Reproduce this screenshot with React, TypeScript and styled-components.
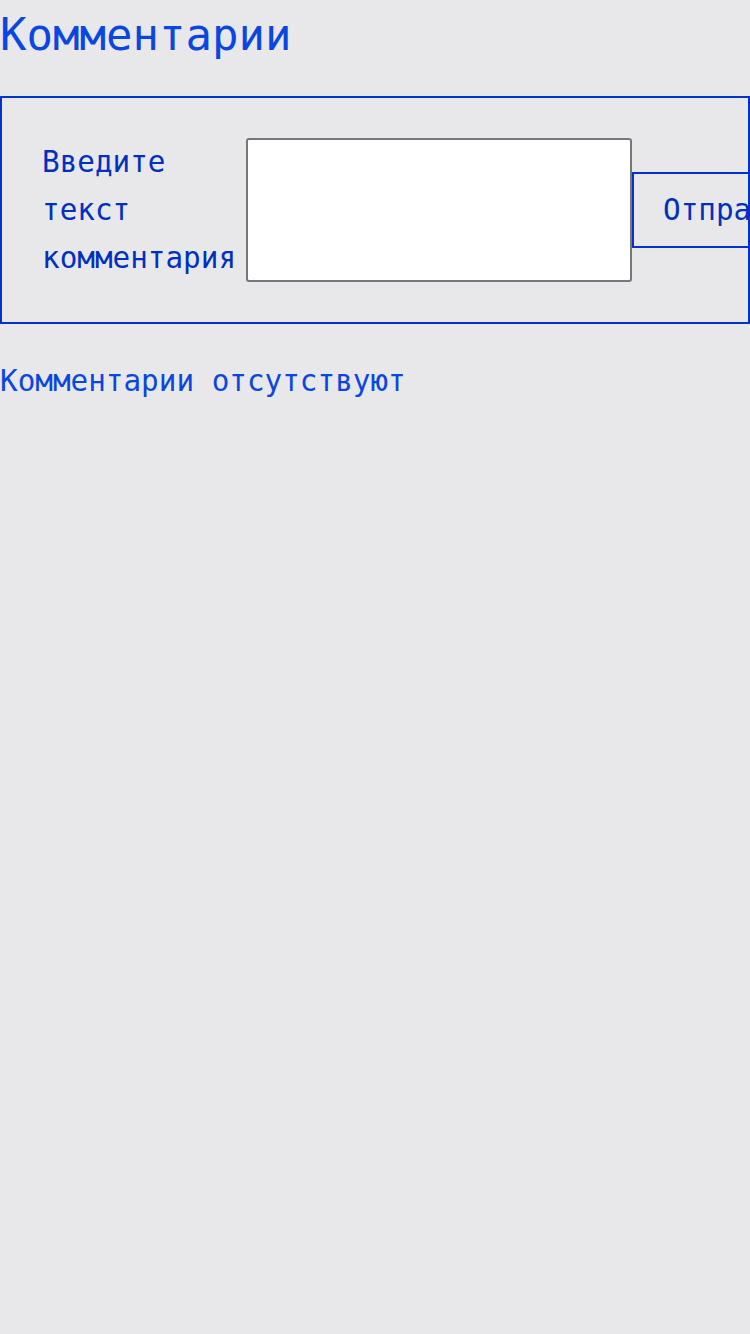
import React from "react";
import styled, { createGlobalStyle } from "styled-components";

const Global = createGlobalStyle`
  html, body { margin: 0; padding: 0; background: #e8e8ea; }
  body { font-family: "DejaVu Sans Mono", "Liberation Mono", monospace; overflow-x: hidden; }
`;

const Page = styled.div`
  width: 750px;
  min-height: 1334px;
  background: #e8e8ea;
  overflow: hidden;
`;

const Title = styled.h1`
  margin: 0;
  padding-top: 3px;
  font-size: 44px;
  font-weight: normal;
  line-height: 64px;
  color: #0a47e0;
`;

const Form = styled.form`
  box-sizing: border-box;
  width: 750px;
  margin-top: 29px;
  padding: 40px 40px;
  border: 2px solid #0033cc;
  display: flex;
  align-items: center;
`;

const Label = styled.label`
  flex: 0 0 194px;
  margin-right: 10px;
  font-size: 29.3px;
  line-height: 48px;
  color: #0030c0;
`;

const TextArea = styled.textarea`
  box-sizing: border-box;
  flex: 0 0 386px;
  height: 144px;
  margin: 0;
  border: 2px solid #777777;
  border-radius: 3px;
  background: #ffffff;
  resize: none;
`;

const Button = styled.button`
  box-sizing: border-box;
  flex: 0 0 auto;
  height: 76px;
  margin: 0;
  padding: 0 29px;
  border: 2px solid #0033cc;
  background: transparent;
  font-family: "DejaVu Sans Mono", "Liberation Mono", monospace;
  font-size: 29.3px;
  color: #0030c0;
  white-space: nowrap;
`;

const Empty = styled.p`
  margin: 35px 0 0;
  font-size: 29.3px;
  line-height: 44px;
  color: #0a47e0;
`;

export default function App() {
  return (
    <Page>
      <Global />
      <Title>Комментарии</Title>
      <Form onSubmit={(e) => e.preventDefault()}>
        <Label htmlFor="comment">Введите текст комментария</Label>
        <TextArea id="comment" />
        <Button type="submit">Отправить</Button>
      </Form>
      <Empty>Комментарии отсутствуют</Empty>
    </Page>
  );
}
